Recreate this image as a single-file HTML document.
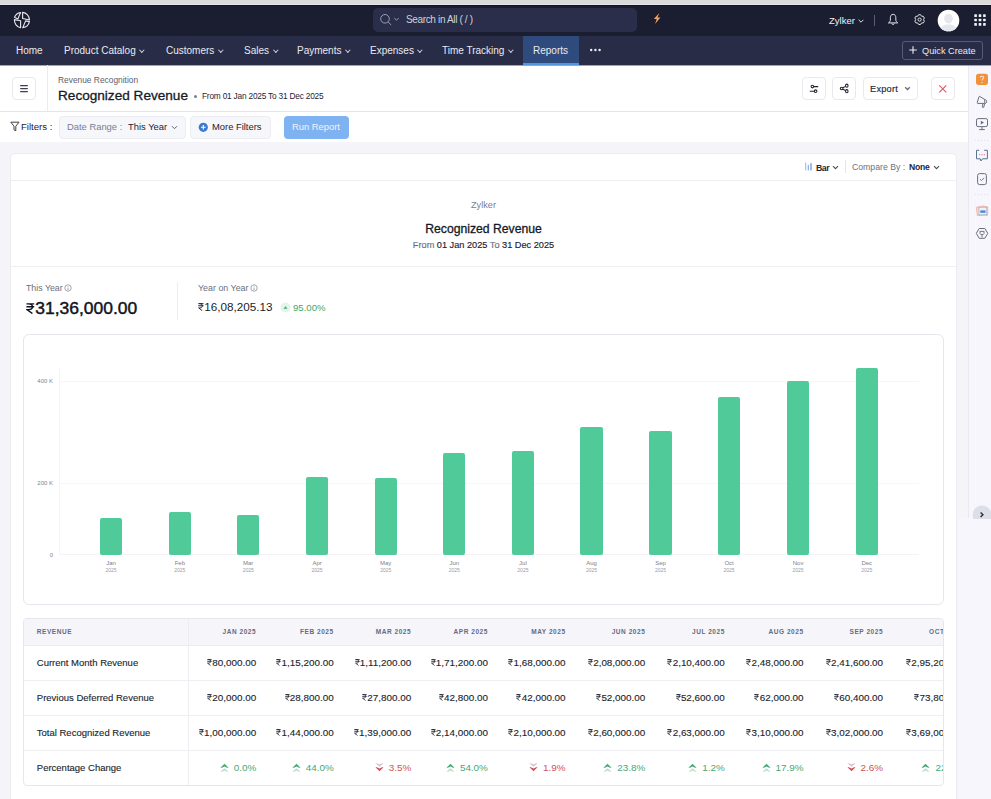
<!DOCTYPE html>
<html><head><meta charset="utf-8">
<style>
*{box-sizing:border-box;margin:0;padding:0}
html,body{width:991px;height:799px;overflow:hidden;background:#f4f4f9;font-family:"Liberation Sans",sans-serif;color:#21263c}
.a{position:absolute}
#strip{left:0;top:0;width:991px;height:5px;background:linear-gradient(#dadada 0,#dadada 4px,#e6e6ec 4px)}
#top{left:0;top:5px;width:991px;height:31px;background:#1b1e30;border-top:1px solid #11131f}
#nav{left:0;top:36px;width:991px;height:30px;background:#282c47;border-bottom:1px solid #a3a4b0}
.nv{position:absolute;top:45px;font-size:10px;color:#e9eaf0;white-space:nowrap;line-height:12px}
.chev{display:inline-block;width:3.6px;height:3.6px;border-right:1px solid #cfd1db;border-bottom:1px solid #cfd1db;transform:rotate(45deg);margin-left:4.5px;position:relative;top:-2.2px}
#hdr{left:0;top:66px;width:968px;height:46px;background:#fff;border-bottom:1px solid #e6e6ea}
#flt{left:0;top:112px;width:968px;height:30px;background:#fff}
#side{left:968px;top:66px;width:23px;height:452px;background:#f6f6fc;border-left:1px solid #e9e9ef}
.btn{position:absolute;background:#fff;border:1px solid #e9e9ed;border-radius:4px}
.t{white-space:nowrap;line-height:1.15}
.rs{display:inline-block;width:.5em;height:.7em;vertical-align:baseline;margin-right:.03em;overflow:visible}
.ax{font-size:6px;color:#80838f;text-align:right;white-space:nowrap;line-height:8px}
.bar{width:22.2px;background:#4fca98;border-radius:2px}
.mo{width:40px;text-align:center;font-size:6px;color:#7d808c;line-height:7px}
.mo span{font-size:5px;color:#9a9da8}
.th{font-size:6.5px;font-weight:bold;letter-spacing:.55px;color:#666a82;white-space:nowrap;line-height:9px}
.td{font-size:9.9px;color:#1b1f2d;-webkit-text-stroke:.12px currentColor;white-space:nowrap;line-height:12px}
.tl{font-size:9.5px;color:#1b1f2d;-webkit-text-stroke:.12px currentColor;white-space:nowrap;line-height:12px}
.pi{display:inline-block;width:9px;height:9px;margin-right:5px;vertical-align:-1px}
</style></head><body>
<svg width="0" height="0" style="position:absolute"><symbol id="r" viewBox="0 0 8 11"><path d="M0.4 0.8H7.6M0.4 3.7H7.6M2.2 0.8C5 0.8 5.9 2 5.9 3.7C5.9 5.5 4.6 6.6 2.2 6.6H0.9L5.9 10.6" fill="none" stroke="currentColor" stroke-width="1.35"/></symbol></svg>
<div class="a" id="strip"></div>
<div class="a" id="top"></div>
<svg class="a" style="left:10px;top:8px" width="24" height="24" viewBox="10 8 24 24" fill="none" stroke="#e6e7ed" stroke-width="1.15" stroke-linejoin="round">
<path d="M20.6 12.5 A7.6 7.7 0 0 0 14.5 17.3 L17.9 18.9 Z"/>
<path d="M14.4 19.6 L20.6 20.7 L20.6 27.7 A7.6 7.7 0 0 1 14.4 19.6 Z"/>
<path d="M22.6 12.4 L22.6 18.5 L29.5 20.0 A7.6 7.7 0 0 0 22.6 12.4 Z"/>
<path d="M22.8 27.6 L25.6 20.9 L29.4 21.6 A7.6 7.7 0 0 1 22.8 27.6 Z"/>
</svg>
<div class="a" style="left:373px;top:8px;width:264px;height:24px;background:#2a2e4a;border-radius:5px"></div>
<svg class="a" style="left:379px;top:13px" width="22" height="14" viewBox="0 0 22 14" fill="none" stroke="#9a9db0" stroke-width="1">
<circle cx="6" cy="5.8" r="4.3"/><path d="M9.1 9 L12.2 12"/><path d="M15.3 5 L17.5 7.2 L19.7 5"/>
</svg>
<div class="a" style="left:406px;top:14px;font-size:10px;color:#cfd1dc;letter-spacing:-0.35px;white-space:nowrap">Search in All ( / )</div>
<svg class="a" style="left:652px;top:12px" width="10" height="13" viewBox="0 0 10 13"><path d="M7.3 1 L1.8 7.1 L4.7 7.1 L3.1 12 L8.4 5.5 L5.5 5.5 Z" fill="#f2a35f"/></svg>
<div class="a" style="left:829px;top:15px;font-size:9.5px;color:#f0f1f5;white-space:nowrap">Zylker</div>
<svg class="a" style="left:857px;top:18px" width="8" height="6" viewBox="0 0 8 6" fill="none" stroke="#e0e1e8" stroke-width="1"><path d="M1.6 1.8 L4 4.2 L6.4 1.8"/></svg>
<div class="a" style="left:874px;top:15px;width:1px;height:11px;background:#5b5f76"></div>
<svg class="a" style="left:880px;top:8px" width="52" height="24" viewBox="880 8 52 24" fill="none" stroke="#e2e3ea" stroke-width="1" stroke-linejoin="round">
<path d="M893.1 14.3C891.3 14.3 890.4 15.8 890.4 17.6L890.3 20.6C890.2 21.6 889.1 22.2 888.4 22.9H897.8C897.1 22.2 896 21.6 895.9 20.6L895.8 17.6C895.8 15.8 894.9 14.3 893.1 14.3Z"/>
<path d="M891.8 23.5A1.35 1.3 0 0 0 894.4 23.5"/>
<path d="M917.65 16.22 L918.65 14.69 L920.55 14.69 L921.55 16.22 L923.37 16.32 L924.33 17.97 L923.50 19.60 L924.33 21.23 L923.37 22.88 L921.55 22.98 L920.55 24.51 L918.65 24.51 L917.65 22.98 L915.83 22.88 L914.87 21.23 L915.70 19.60 L914.87 17.97 L915.83 16.32 Z"/>
<circle cx="919.6" cy="19.6" r="1.6"/>
</svg>

<svg class="a" style="left:937px;top:9px" width="23" height="23" viewBox="0 0 23 23"><defs><clipPath id="av"><circle cx="11.5" cy="11.5" r="10.8"/></clipPath></defs><circle cx="11.5" cy="11.5" r="10.8" fill="#ffffff"/><g clip-path="url(#av)" fill="#e4e7ee"><ellipse cx="11.5" cy="9.6" rx="4.3" ry="4.9"/><path d="M2.5 24 C3 17.5 7 15.6 11.5 15.6 C16 15.6 20 17.5 20.5 24 Z"/></g></svg>
<svg class="a" style="left:974px;top:14px" width="12" height="12" viewBox="0 0 12 12" fill="#f2f3f7"><rect x="0.3" y="0.3" width="2.6" height="2.6" rx=".5"/><rect x="4.7" y="0.3" width="2.6" height="2.6" rx=".5"/><rect x="9.1" y="0.3" width="2.6" height="2.6" rx=".5"/><rect x="0.3" y="4.7" width="2.6" height="2.6" rx=".5"/><rect x="4.7" y="4.7" width="2.6" height="2.6" rx=".5"/><rect x="9.1" y="4.7" width="2.6" height="2.6" rx=".5"/><rect x="0.3" y="9.1" width="2.6" height="2.6" rx=".5"/><rect x="4.7" y="9.1" width="2.6" height="2.6" rx=".5"/><rect x="9.1" y="9.1" width="2.6" height="2.6" rx=".5"/></svg>
<div class="a" id="nav"></div>
<div class="nv" style="left:16px">Home</div>
<div class="nv" style="left:64px">Product Catalog<span class="chev"></span></div>
<div class="nv" style="left:166px">Customers<span class="chev"></span></div>
<div class="nv" style="left:244px">Sales<span class="chev"></span></div>
<div class="nv" style="left:297px">Payments<span class="chev"></span></div>
<div class="nv" style="left:370px">Expenses<span class="chev"></span></div>
<div class="nv" style="left:442px">Time Tracking<span class="chev"></span></div>

<div class="a" style="left:523px;top:36px;width:56px;height:29px;background:#2f4a7d;border-bottom:2px solid #5294de"></div>
<div class="nv" style="left:533px">Reports</div>
<svg class="a" style="left:588px;top:48px" width="14" height="4" viewBox="0 0 14 4" fill="#eceef3"><circle cx="3.2" cy="2" r="1.2"/><circle cx="7.4" cy="2" r="1.2"/><circle cx="11.6" cy="2" r="1.2"/></svg>
<div class="a" style="left:902px;top:41px;width:81px;height:19px;border:1px solid #575b75;border-radius:3px"></div>
<svg class="a" style="left:908px;top:45px" width="10" height="10" viewBox="0 0 10 10" stroke="#eceef3" stroke-width="1.1"><path d="M5 1.2V8.8M1.2 5H8.8"/></svg>
<div class="nv" style="left:922px;top:45px;font-size:9.2px">Quick Create</div>
<div class="a" id="hdr"></div>
<div class="btn" style="left:12px;top:77px;width:24px;height:23px"></div>
<svg class="a" style="left:19px;top:84px" width="10" height="9" viewBox="0 0 10 9" stroke="#3a3f52" stroke-width="1.05"><path d="M1.2 1.6H8.8M1.2 4.6H8.8M1.2 7.6H8.8"/></svg>
<div class="a" style="left:47px;top:65px;width:1px;height:46px;background:#ececf0"></div>
<div class="a" style="left:58px;top:75px;font-size:8.4px;color:#5c6070;white-space:nowrap">Revenue Recognition</div>
<div class="a" style="left:58px;top:88px;font-size:13.6px;color:#161a28;white-space:nowrap;-webkit-text-stroke:.3px #161a28">Recognized Revenue</div>
<div class="a" style="left:193.5px;top:94.5px;width:3.2px;height:3.2px;border-radius:50%;background:#7a7e8c"></div>
<div class="a" style="left:202px;top:91px;font-size:8.3px;letter-spacing:-.2px;color:#222634;white-space:nowrap">From 01 Jan 2025 To 31 Dec 2025</div>
<div class="btn" style="left:802px;top:77px;width:24px;height:23px"></div>
<svg class="a" style="left:806px;top:82px" width="16" height="13" viewBox="806 82 16 13" fill="none" stroke="#1f2330" stroke-width="1.05"><path d="M813.7 86.6H818.2M809.8 91.2H814.1"/><circle cx="812.4" cy="86.6" r="1.3"/><circle cx="815.6" cy="91.2" r="1.3"/></svg>
<div class="btn" style="left:832px;top:77px;width:24px;height:23px"></div>
<svg class="a" style="left:836px;top:82px" width="16" height="13" viewBox="836 82 16 13" fill="none" stroke="#1f2330" stroke-width="1.05"><circle cx="841.6" cy="88.5" r="1.3"/><ellipse cx="846.8" cy="85.7" rx="1.25" ry="1.6"/><ellipse cx="846.8" cy="91.2" rx="1.25" ry="1.6"/><path d="M842.9 87.8L845.5 86.4M842.9 89.2L845.5 90.5"/></svg>
<div class="btn" style="left:863px;top:77px;width:55px;height:23px"></div>
<div class="a" style="left:870px;top:84px;font-size:9.2px;letter-spacing:.25px;color:#21263a;white-space:nowrap;-webkit-text-stroke:.15px #21263a">Export</div>
<svg class="a" style="left:904px;top:86px" width="7" height="5" viewBox="0 0 7 5" fill="none" stroke="#6a6d7a" stroke-width="1.4"><path d="M1.2 1.3L3.5 3.5L5.8 1.3"/></svg>
<div class="btn" style="left:931px;top:77px;width:24px;height:23px"></div>
<svg class="a" style="left:938px;top:84px" width="10" height="10" viewBox="0 0 10 10" stroke="#d95a5f" stroke-width="1.1"><path d="M1.3 1.3L8.3 8.3M8.3 1.3L1.3 8.3"/></svg>
<div class="a" id="flt"></div>
<svg class="a" style="left:10px;top:121px" width="10" height="11" viewBox="0 0 10 11" fill="none" stroke="#2a2e3c" stroke-width=".9"><path d="M0.8 1.2H9L5.8 5.2V9.8L4 8.8V5.2Z" stroke-linejoin="round"/></svg>
<div class="a" style="left:21px;top:121px;font-size:9.6px;color:#1e2232;white-space:nowrap">Filters :</div>
<div class="a" style="left:59px;top:116px;width:127px;height:23px;background:#f6f7fb;border:1px solid #ececf2;border-radius:4px"></div>
<div class="a" style="left:67px;top:121px;font-size:9.4px;color:#7b7f8e;white-space:nowrap">Date Range :</div>
<div class="a" style="left:128px;top:121px;font-size:9.4px;color:#1e2232;white-space:nowrap">This Year</div>
<svg class="a" style="left:171px;top:125px" width="7" height="5" viewBox="0 0 7 5" fill="none" stroke="#5d6172" stroke-width="1"><path d="M1 1.2L3.5 3.7L6 1.2"/></svg>
<div class="a" style="left:190px;top:116px;width:81px;height:23px;background:#f6f7fb;border:1px solid #ececf2;border-radius:4px"></div>
<svg class="a" style="left:198px;top:122px" width="11" height="11" viewBox="0 0 11 11"><circle cx="5.3" cy="5.3" r="4.6" fill="#3b7bd4"/><path d="M5.3 3V7.6M3 5.3H7.6" stroke="#fff" stroke-width="1.1"/></svg>
<div class="a" style="left:212px;top:121px;font-size:9.4px;color:#1e2232;white-space:nowrap">More Filters</div>
<div class="a" style="left:284px;top:116px;width:65px;height:23px;background:#7fb2f0;border-radius:4px"></div>
<div class="a" style="left:292px;top:121px;font-size:9.4px;color:#eef5ff;white-space:nowrap">Run Report</div>
<div class="a" id="side"></div>
<svg class="a" style="left:968px;top:65px" width="23" height="190" viewBox="968 65 23 190">
<rect x="976" y="73.7" width="12" height="11.2" rx="2.6" fill="#f0913b"/>
<path d="M980.3 77.4C980.3 75.9 983.7 75.9 983.7 77.6C983.7 78.9 982 78.9 982 80.6" fill="none" stroke="#fde7d2" stroke-width="1.1"/><circle cx="982" cy="82.6" r=".65" fill="#fde7d2"/>
<g fill="none" stroke="#6b6e7b" stroke-width="1" stroke-linejoin="round">
<path d="M979.6 96.4L984.6 99.4L984.9 103.4L977.7 103.4C977.3 103.4 977.1 103 977.2 102.6L979 96.7Z"/><path d="M984.6 99.4C986.4 99.7 986.9 100.8 986.6 102.2C986.3 103.2 985.6 103.5 984.9 103.4"/><path d="M982.9 103.6L982.4 106.9C982.3 107.6 983.6 107.8 983.8 107.2L984.6 103.6"/>
<rect x="976.5" y="118.6" width="11" height="8" rx="1.6"/><path d="M982 127.1V129.3M979.2 129.6H984.8"/>
</g>
<path d="M980.8 120.7L984 122.6L980.8 124.5Z" fill="#6b6e7b"/>
<g fill="#c9cbd6"><circle cx="975.6" cy="140.2" r=".45"/><circle cx="978.6" cy="140.2" r=".45"/><circle cx="981.6" cy="140.2" r=".45"/><circle cx="984.6" cy="140.2" r=".45"/><circle cx="987.6" cy="140.2" r=".45"/>
<circle cx="975.6" cy="194.5" r=".45"/><circle cx="978.6" cy="194.5" r=".45"/><circle cx="981.6" cy="194.5" r=".45"/><circle cx="984.6" cy="194.5" r=".45"/><circle cx="987.6" cy="194.5" r=".45"/></g>
<path d="M979.2 150.3H976.5V158.8H980.3L980.9 161L982.5 158.8H987.4V150.3H984.2" fill="none" stroke="#5b7090" stroke-width="1"/>
<g fill="#e77b80"><circle cx="979.7" cy="154.7" r=".65"/><circle cx="982" cy="154.7" r=".65"/><circle cx="984.3" cy="154.7" r=".65"/></g>
<rect x="977.6" y="173.6" width="8.8" height="11" rx="2" fill="none" stroke="#6b6e7b" stroke-width="1"/>
<path d="M979.9 179.2L981.5 180.6L984.1 177.8" fill="none" stroke="#6b6e7b" stroke-width=".9"/>
<path d="M976.3 207.3L983 206L987.8 207L987.6 215.3L977.4 215.6Z" fill="#f6d9d2" stroke="#e9a593" stroke-width=".7"/>
<rect x="979" y="207.2" width="7.8" height="7.6" fill="#eef1f6" stroke="#8da0b8" stroke-width=".5"/>
<rect x="980.3" y="210.4" width="5.2" height="2.4" fill="#4a86d0"/>
<path d="M979.2 228.5H984.8L987.8 233.3L984.8 238.3H979.2L976.3 233.3Z" fill="none" stroke="#6b6e7b" stroke-width="1" stroke-linejoin="round"/>
<path d="M980 231.4V233.6C980 235 984 235 984 233.6V231.4M982 235V237.4M979.8 231.4H984.2" fill="none" stroke="#6b6e7b" stroke-width=".9"/>
</svg>
<div class="a" style="left:958px;top:518px;width:33px;height:281px;background:#f6f6fc"></div>
<svg class="a" style="left:970px;top:504px" width="21" height="15" viewBox="970 504 21 15"><circle cx="982" cy="515" r="9.5" fill="#dcdfe7"/><path d="M980.6 512.5L982.9 514.7L980.6 516.9" fill="none" stroke="#2a2e3c" stroke-width="1.4"/></svg>
<div class="a" style="left:10px;top:153px;width:947px;height:700px;background:#fff;border:1px solid #ebebf0;border-radius:5px"></div>
<div class="a" style="left:11px;top:180px;width:945px;height:1px;background:#efeff3"></div>
<svg class="a" style="left:804px;top:162px" width="9" height="9" viewBox="0 0 9 9"><rect x="1" y="0.6" width="1.2" height="7.8" fill="#9cc6f2"/><rect x="3.7" y="2.8" width="1.2" height="5.6" fill="#7fb2ea"/><rect x="6.4" y="1.2" width="1.2" height="7.2" fill="#5d93d6"/></svg>
<div class="a t" style="left:816px;top:162.5px;font-size:8.7px;letter-spacing:-.4px;font-weight:bold;color:#21263a">Bar</div>
<svg class="a" style="left:832px;top:165px" width="7" height="5" viewBox="0 0 7 5" fill="none" stroke="#4a4e5e" stroke-width="1.1"><path d="M1 1.2L3.5 3.7L6 1.2"/></svg>
<div class="a" style="left:845px;top:160px;width:1px;height:13px;background:#e6e6eb"></div>
<div class="a t" style="left:852px;top:162px;font-size:8.7px;color:#6d7181">Compare By :</div>
<div class="a t" style="left:909px;top:162.5px;font-size:8.6px;letter-spacing:-.2px;font-weight:bold;color:#21263a">None</div>
<svg class="a" style="left:933px;top:165px" width="7" height="5" viewBox="0 0 7 5" fill="none" stroke="#4a4e5e" stroke-width="1.1"><path d="M1 1.2L3.5 3.7L6 1.2"/></svg>

<div class="a t" style="left:10px;width:947px;top:200px;text-align:center;font-size:9.2px;color:#7c808e">Zylker</div>
<div class="a t" style="left:10px;width:947px;top:222px;text-align:center;font-size:12.2px;color:#141826;-webkit-text-stroke:.3px #141826">Recognized Revenue</div>
<div class="a t" style="left:10px;width:947px;top:240px;text-align:center;font-size:9.2px;color:#1d2130;-webkit-text-stroke:.15px #1d2130"><span style="color:#85899a">From</span> 01 Jan 2025 <span style="color:#85899a">To</span> 31 Dec 2025</div>
<div class="a" style="left:11px;top:266px;width:945px;height:1px;background:#efeff3"></div>

<div class="a t" style="left:26px;top:283px;font-size:8.8px;color:#6b6f7e">This Year</div>
<svg class="a" style="left:64px;top:284px" width="8" height="8" viewBox="0 0 8 8" fill="none" stroke="#8a8e9c" stroke-width=".8"><circle cx="4" cy="4" r="3.2"/><path d="M4 3.5V6M4 2.2V2.8"/></svg>
<div class="a t" style="left:26px;top:300px;font-size:15.8px;color:#0f1320;-webkit-text-stroke:.4px #0f1320;transform:scaleX(1.105);transform-origin:0 0"><svg class="rs" viewBox="0 0 8 11"><use href="#r"/></svg>31,36,000.00</div>
<div class="a" style="left:177px;top:282px;width:1px;height:38px;background:#eeeef2"></div>
<div class="a t" style="left:198px;top:283px;font-size:8.9px;color:#6b6f7e">Year on Year</div>
<svg class="a" style="left:250px;top:284px" width="8" height="8" viewBox="0 0 8 8" fill="none" stroke="#8a8e9c" stroke-width=".8"><circle cx="4" cy="4" r="3.2"/><path d="M4 3.5V6M4 2.2V2.8"/></svg>
<div class="a t" style="left:198px;top:300px;font-size:11.7px;color:#1a1e2c"><svg class="rs" viewBox="0 0 8 11"><use href="#r"/></svg>16,08,205.13</div>
<svg class="a" style="left:280px;top:302px" width="11" height="11" viewBox="0 0 11 11"><circle cx="5.5" cy="5.5" r="5" fill="#e3f4ea"/><path d="M3.6 6.7L5.5 4.2L7.4 6.7Z" fill="#3da766"/></svg>
<div class="a t" style="left:293px;top:302px;font-size:9.6px;color:#3da766">95.00%</div>

<div class="a" style="left:23px;top:334px;width:921px;height:271px;border:1px solid #e6e6ec;border-radius:6px"></div>
<div class="a" style="left:59px;top:368px;width:1px;height:187px;background:#f4f4f7"></div>
<div class="a" style="left:60px;top:381px;width:859px;height:1px;background:#f6f6f8"></div>
<div class="a" style="left:60px;top:483px;width:859px;height:1px;background:#f6f6f8"></div>
<div class="a" style="left:60px;top:554px;width:859px;height:1px;background:#f3f3f6"></div>
<div class="a ax" style="left:25px;width:28px;top:377px">400 K</div>
<div class="a ax" style="left:25px;width:28px;top:479px">200 K</div>
<div class="a ax" style="left:25px;width:28px;top:551px">0</div>

<div class="a bar" style="left:100.0px;top:517.8px;height:36.8px"></div>
<div class="a mo" style="left:91.1px;top:560px">Jan<br><span>2025</span></div>
<div class="a bar" style="left:168.7px;top:512.2px;height:42.4px"></div>
<div class="a mo" style="left:159.8px;top:560px">Feb<br><span>2025</span></div>
<div class="a bar" style="left:237.1px;top:514.9px;height:39.7px"></div>
<div class="a mo" style="left:228.2px;top:560px">Mar<br><span>2025</span></div>
<div class="a bar" style="left:306.0px;top:476.6px;height:78.0px"></div>
<div class="a mo" style="left:297.1px;top:560px">Apr<br><span>2025</span></div>
<div class="a bar" style="left:374.6px;top:478.3px;height:76.3px"></div>
<div class="a mo" style="left:365.7px;top:560px">May<br><span>2025</span></div>
<div class="a bar" style="left:443.2px;top:452.8px;height:101.8px"></div>
<div class="a mo" style="left:434.3px;top:560px">Jun<br><span>2025</span></div>
<div class="a bar" style="left:511.8px;top:451.2px;height:103.4px"></div>
<div class="a mo" style="left:502.9px;top:560px">Jul<br><span>2025</span></div>
<div class="a bar" style="left:580.4px;top:427.0px;height:127.6px"></div>
<div class="a mo" style="left:571.5px;top:560px">Aug<br><span>2025</span></div>
<div class="a bar" style="left:649.4px;top:431.3px;height:123.3px"></div>
<div class="a mo" style="left:640.5px;top:560px">Sep<br><span>2025</span></div>
<div class="a bar" style="left:718.0px;top:396.8px;height:157.8px"></div>
<div class="a mo" style="left:709.1px;top:560px">Oct<br><span>2025</span></div>
<div class="a bar" style="left:787.0px;top:381.2px;height:173.4px"></div>
<div class="a mo" style="left:778.1px;top:560px">Nov<br><span>2025</span></div>
<div class="a bar" style="left:855.7px;top:368.1px;height:186.5px"></div>
<div class="a mo" style="left:846.8px;top:560px">Dec<br><span>2025</span></div>
<div class="a" id="tbl" style="left:23px;top:618px;width:921px;height:168px;border:1px solid #e6e6ec;border-radius:4px;overflow:hidden;background:#fff">
<div class="a" style="left:0;top:0;width:921px;height:27px;background:#f6f6fa;border-bottom:1px solid #ebebf0"></div>
<div class="a" style="left:0;top:61px;width:921px;height:1px;background:#efeff3"></div>
<div class="a" style="left:0;top:96px;width:921px;height:1px;background:#efeff3"></div>
<div class="a" style="left:0;top:131px;width:921px;height:1px;background:#efeff3"></div>
<div class="a" style="left:164px;top:0;width:1px;height:168px;background:#eeeef2"></div>
<div class="a th" style="left:12.8px;top:8px">REVENUE</div>
<div class="a th" style="right:686.8px;top:8px;text-align:right">JAN 2025</div>
<div class="a th" style="right:609.3px;top:8px;text-align:right">FEB 2025</div>
<div class="a th" style="right:531.8px;top:8px;text-align:right">MAR 2025</div>
<div class="a th" style="right:455.1px;top:8px;text-align:right">APR 2025</div>
<div class="a th" style="right:377.4px;top:8px;text-align:right">MAY 2025</div>
<div class="a th" style="right:297.7px;top:8px;text-align:right">JUN 2025</div>
<div class="a th" style="right:218.2px;top:8px;text-align:right">JUL 2025</div>
<div class="a th" style="right:139.4px;top:8px;text-align:right">AUG 2025</div>
<div class="a th" style="right:59.9px;top:8px;text-align:right">SEP 2025</div>
<div class="a th" style="right:-20.5px;top:8px;text-align:right">OCT 2025</div>
<div class="a tl" style="left:12.8px;top:38px">Current Month Revenue</div>
<div class="a td" style="right:686.8px;top:38px"><svg class="rs" viewBox="0 0 8 11"><use href="#r"/></svg>80,000.00</div>
<div class="a td" style="right:609.3px;top:38px"><svg class="rs" viewBox="0 0 8 11"><use href="#r"/></svg>1,15,200.00</div>
<div class="a td" style="right:531.8px;top:38px"><svg class="rs" viewBox="0 0 8 11"><use href="#r"/></svg>1,11,200.00</div>
<div class="a td" style="right:455.1px;top:38px"><svg class="rs" viewBox="0 0 8 11"><use href="#r"/></svg>1,71,200.00</div>
<div class="a td" style="right:377.4px;top:38px"><svg class="rs" viewBox="0 0 8 11"><use href="#r"/></svg>1,68,000.00</div>
<div class="a td" style="right:297.7px;top:38px"><svg class="rs" viewBox="0 0 8 11"><use href="#r"/></svg>2,08,000.00</div>
<div class="a td" style="right:218.2px;top:38px"><svg class="rs" viewBox="0 0 8 11"><use href="#r"/></svg>2,10,400.00</div>
<div class="a td" style="right:139.4px;top:38px"><svg class="rs" viewBox="0 0 8 11"><use href="#r"/></svg>2,48,000.00</div>
<div class="a td" style="right:59.9px;top:38px"><svg class="rs" viewBox="0 0 8 11"><use href="#r"/></svg>2,41,600.00</div>
<div class="a td" style="right:-20.5px;top:38px"><svg class="rs" viewBox="0 0 8 11"><use href="#r"/></svg>2,95,200.00</div>
<div class="a tl" style="left:12.8px;top:73px">Previous Deferred Revenue</div>
<div class="a td" style="right:686.8px;top:73px"><svg class="rs" viewBox="0 0 8 11"><use href="#r"/></svg>20,000.00</div>
<div class="a td" style="right:609.3px;top:73px"><svg class="rs" viewBox="0 0 8 11"><use href="#r"/></svg>28,800.00</div>
<div class="a td" style="right:531.8px;top:73px"><svg class="rs" viewBox="0 0 8 11"><use href="#r"/></svg>27,800.00</div>
<div class="a td" style="right:455.1px;top:73px"><svg class="rs" viewBox="0 0 8 11"><use href="#r"/></svg>42,800.00</div>
<div class="a td" style="right:377.4px;top:73px"><svg class="rs" viewBox="0 0 8 11"><use href="#r"/></svg>42,000.00</div>
<div class="a td" style="right:297.7px;top:73px"><svg class="rs" viewBox="0 0 8 11"><use href="#r"/></svg>52,000.00</div>
<div class="a td" style="right:218.2px;top:73px"><svg class="rs" viewBox="0 0 8 11"><use href="#r"/></svg>52,600.00</div>
<div class="a td" style="right:139.4px;top:73px"><svg class="rs" viewBox="0 0 8 11"><use href="#r"/></svg>62,000.00</div>
<div class="a td" style="right:59.9px;top:73px"><svg class="rs" viewBox="0 0 8 11"><use href="#r"/></svg>60,400.00</div>
<div class="a td" style="right:-20.5px;top:73px"><svg class="rs" viewBox="0 0 8 11"><use href="#r"/></svg>73,800.00</div>
<div class="a tl" style="left:12.8px;top:108px">Total Recognized Revenue</div>
<div class="a td" style="right:686.8px;top:108px"><svg class="rs" viewBox="0 0 8 11"><use href="#r"/></svg>1,00,000.00</div>
<div class="a td" style="right:609.3px;top:108px"><svg class="rs" viewBox="0 0 8 11"><use href="#r"/></svg>1,44,000.00</div>
<div class="a td" style="right:531.8px;top:108px"><svg class="rs" viewBox="0 0 8 11"><use href="#r"/></svg>1,39,000.00</div>
<div class="a td" style="right:455.1px;top:108px"><svg class="rs" viewBox="0 0 8 11"><use href="#r"/></svg>2,14,000.00</div>
<div class="a td" style="right:377.4px;top:108px"><svg class="rs" viewBox="0 0 8 11"><use href="#r"/></svg>2,10,000.00</div>
<div class="a td" style="right:297.7px;top:108px"><svg class="rs" viewBox="0 0 8 11"><use href="#r"/></svg>2,60,000.00</div>
<div class="a td" style="right:218.2px;top:108px"><svg class="rs" viewBox="0 0 8 11"><use href="#r"/></svg>2,63,000.00</div>
<div class="a td" style="right:139.4px;top:108px"><svg class="rs" viewBox="0 0 8 11"><use href="#r"/></svg>3,10,000.00</div>
<div class="a td" style="right:59.9px;top:108px"><svg class="rs" viewBox="0 0 8 11"><use href="#r"/></svg>3,02,000.00</div>
<div class="a td" style="right:-20.5px;top:108px"><svg class="rs" viewBox="0 0 8 11"><use href="#r"/></svg>3,69,000.00</div>
<div class="a tl" style="left:12.8px;top:143px">Percentage Change</div>
<div class="a td" style="right:686.8px;top:143px;color:#47a877;-webkit-text-stroke:0"><svg class="pi" viewBox="0 0 10 10"><path d="M0.5 5.4L5 0.8L9.5 5.4L7.8 5.4L5 3.9L2.2 5.4Z" fill="#4aa878"/><path d="M0.5 9.6L5 5.7L9.5 9.6L7.8 9.6L5 8.2L2.2 9.6Z" fill="#b8e0c8"/></svg>0.0%</div>
<div class="a td" style="right:609.3px;top:143px;color:#47a877;-webkit-text-stroke:0"><svg class="pi" viewBox="0 0 10 10"><path d="M0.5 5.4L5 0.8L9.5 5.4L7.8 5.4L5 3.9L2.2 5.4Z" fill="#4aa878"/><path d="M0.5 9.6L5 5.7L9.5 9.6L7.8 9.6L5 8.2L2.2 9.6Z" fill="#b8e0c8"/></svg>44.0%</div>
<div class="a td" style="right:531.8px;top:143px;color:#d0525a;-webkit-text-stroke:0"><svg class="pi" viewBox="0 0 10 10"><path d="M0.5 0.4L5 4.3L9.5 0.4L7.8 0.4L5 1.8L2.2 0.4Z" fill="#ecb9bc"/><path d="M0.5 4.6L5 9.2L9.5 4.6L7.8 4.6L5 6.1L2.2 4.6Z" fill="#d2525c"/></svg>3.5%</div>
<div class="a td" style="right:455.1px;top:143px;color:#47a877;-webkit-text-stroke:0"><svg class="pi" viewBox="0 0 10 10"><path d="M0.5 5.4L5 0.8L9.5 5.4L7.8 5.4L5 3.9L2.2 5.4Z" fill="#4aa878"/><path d="M0.5 9.6L5 5.7L9.5 9.6L7.8 9.6L5 8.2L2.2 9.6Z" fill="#b8e0c8"/></svg>54.0%</div>
<div class="a td" style="right:377.4px;top:143px;color:#d0525a;-webkit-text-stroke:0"><svg class="pi" viewBox="0 0 10 10"><path d="M0.5 0.4L5 4.3L9.5 0.4L7.8 0.4L5 1.8L2.2 0.4Z" fill="#ecb9bc"/><path d="M0.5 4.6L5 9.2L9.5 4.6L7.8 4.6L5 6.1L2.2 4.6Z" fill="#d2525c"/></svg>1.9%</div>
<div class="a td" style="right:297.7px;top:143px;color:#47a877;-webkit-text-stroke:0"><svg class="pi" viewBox="0 0 10 10"><path d="M0.5 5.4L5 0.8L9.5 5.4L7.8 5.4L5 3.9L2.2 5.4Z" fill="#4aa878"/><path d="M0.5 9.6L5 5.7L9.5 9.6L7.8 9.6L5 8.2L2.2 9.6Z" fill="#b8e0c8"/></svg>23.8%</div>
<div class="a td" style="right:218.2px;top:143px;color:#47a877;-webkit-text-stroke:0"><svg class="pi" viewBox="0 0 10 10"><path d="M0.5 5.4L5 0.8L9.5 5.4L7.8 5.4L5 3.9L2.2 5.4Z" fill="#4aa878"/><path d="M0.5 9.6L5 5.7L9.5 9.6L7.8 9.6L5 8.2L2.2 9.6Z" fill="#b8e0c8"/></svg>1.2%</div>
<div class="a td" style="right:139.4px;top:143px;color:#47a877;-webkit-text-stroke:0"><svg class="pi" viewBox="0 0 10 10"><path d="M0.5 5.4L5 0.8L9.5 5.4L7.8 5.4L5 3.9L2.2 5.4Z" fill="#4aa878"/><path d="M0.5 9.6L5 5.7L9.5 9.6L7.8 9.6L5 8.2L2.2 9.6Z" fill="#b8e0c8"/></svg>17.9%</div>
<div class="a td" style="right:59.9px;top:143px;color:#d0525a;-webkit-text-stroke:0"><svg class="pi" viewBox="0 0 10 10"><path d="M0.5 0.4L5 4.3L9.5 0.4L7.8 0.4L5 1.8L2.2 0.4Z" fill="#ecb9bc"/><path d="M0.5 4.6L5 9.2L9.5 4.6L7.8 4.6L5 6.1L2.2 4.6Z" fill="#d2525c"/></svg>2.6%</div>
<div class="a td" style="right:-20.5px;top:143px;color:#47a877;-webkit-text-stroke:0"><svg class="pi" viewBox="0 0 10 10"><path d="M0.5 5.4L5 0.8L9.5 5.4L7.8 5.4L5 3.9L2.2 5.4Z" fill="#4aa878"/><path d="M0.5 9.6L5 5.7L9.5 9.6L7.8 9.6L5 8.2L2.2 9.6Z" fill="#b8e0c8"/></svg>22.2%</div>
</div>
</body></html>
